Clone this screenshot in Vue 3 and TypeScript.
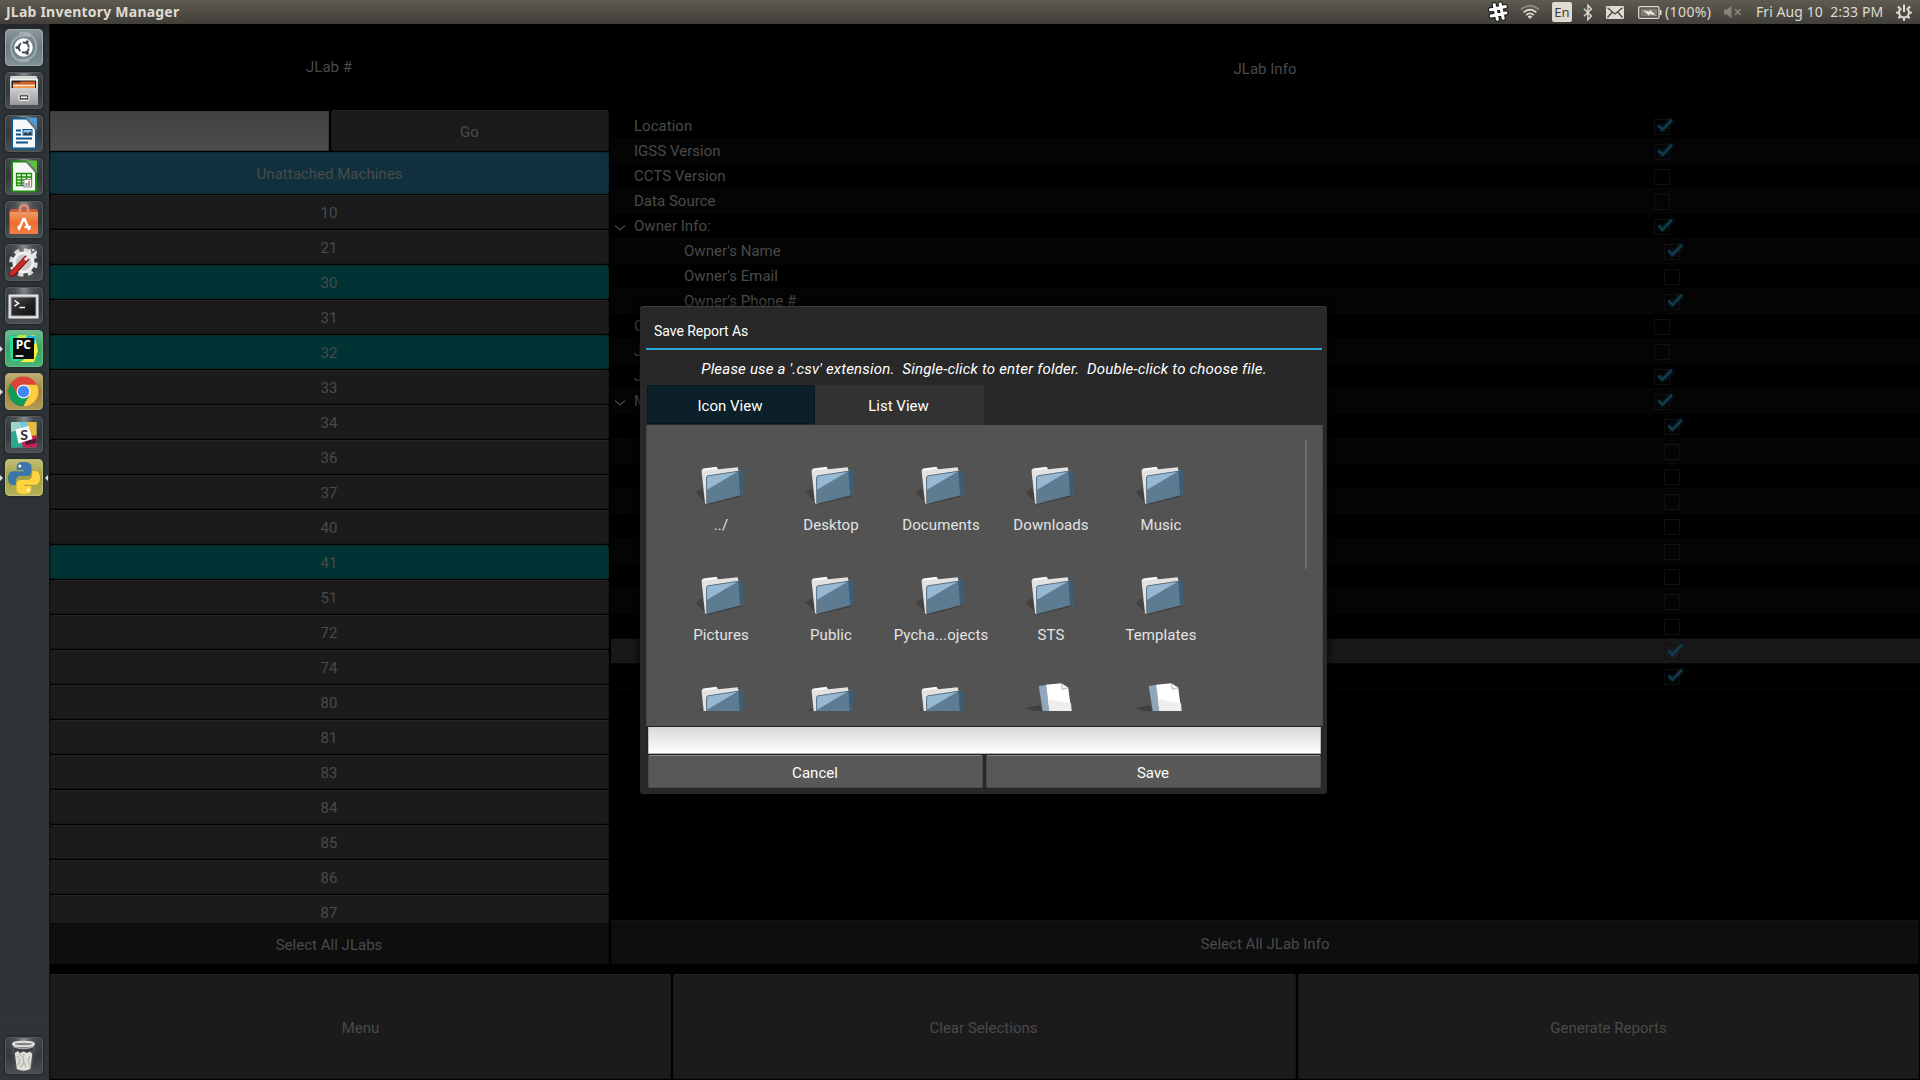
<script setup lang="ts">
interface TreeRow { label: string; depth: number; checked: boolean; caret?: boolean; active?: boolean }
interface LauncherApp { id: string; tint?: string; running?: boolean; focused?: boolean }
interface FileEntry { name: string; kind: 'folder' | 'file' }

const machines: number[] = [10, 21, 30, 31, 32, 33, 34, 36, 37, 40, 41, 51, 72, 74, 80, 81, 83, 84, 85, 86, 87]
const selected = new Set<number>([30, 32, 41])

const rows: TreeRow[] = [
  { label: 'Location', depth: 0, checked: true },
  { label: 'IGSS Version', depth: 0, checked: true },
  { label: 'CCTS Version', depth: 0, checked: false },
  { label: 'Data Source', depth: 0, checked: false },
  { label: 'Owner Info:', depth: 0, checked: true, caret: true },
  { label: "Owner's Name", depth: 1, checked: true },
  { label: "Owner's Email", depth: 1, checked: false },
  { label: "Owner's Phone #", depth: 1, checked: true },
  { label: 'O', depth: 0, checked: false },
  { label: 'J', depth: 0, checked: false },
  { label: 'J', depth: 0, checked: true },
  { label: 'M', depth: 0, checked: true, caret: true },
  { label: '', depth: 1, checked: true },
  ...Array.from({ length: 8 }, (): TreeRow => ({ label: '', depth: 1, checked: false })),
  { label: '', depth: 1, checked: true, active: true },
  { label: '', depth: 1, checked: true },
]

const files: FileEntry[] = [
  ...['../', 'Desktop', 'Documents', 'Downloads', 'Music', 'Pictures', 'Public', 'Pycha...ojects', 'STS', 'Templates', '', '', '']
    .map((name): FileEntry => ({ name, kind: 'folder' })),
  { name: '', kind: 'file' },
  { name: '', kind: 'file' },
]

const apps: LauncherApp[] = [
  { id: 'dash', tint: 'dash' },
  { id: 'files' },
  { id: 'writer' },
  { id: 'calc' },
  { id: 'software' },
  { id: 'settings' },
  { id: 'terminal' },
  { id: 'pycharm', tint: 'green', running: true },
  { id: 'chrome', tint: 'gold', running: true },
  { id: 'slack' },
  { id: 'python', tint: 'olive', running: true, focused: true },
]
</script>

<template>
  <div class="desktop">
    <header class="topbar">
      <span class="title">JLab Inventory Manager</span>
      <div class="tray">
        <svg class="i-slack" width="22" height="22" viewBox="0 0 22 22"><g fill="none" stroke-linecap="round"><g stroke="#22211f" stroke-width="5.4"><path d="M7.2 3.6l3.2 14.6M13.2 2.9l3 14.3M3.4 8.7l15-3.2M4.2 15l14.8-3.1" /></g><g stroke="#fff" stroke-width="3"><path d="M7.2 3.6l3.2 14.6M13.2 2.9l3 14.3M3.4 8.7l15-3.2M4.2 15l14.8-3.1" /></g></g></svg>
        <svg class="i-wifi" width="20" height="16" viewBox="0 0 20 16"><g fill="none" stroke-width="1.8"><path d="M1 5.5Q10-2 19 5.5" stroke="#8b8880" /><path d="M3.6 8.4q6.4-5.600 12.800 0" stroke="#dfdbd2" /><path d="M6.200 11q3.800-3.200 7.600 0" stroke="#dfdbd2" /></g><path d="M7.600 12.600q2.400-2 4.800 0L10 15z" fill="#dfdbd2" /></svg>
        <span class="lang">En</span>
        <svg class="i-bt" width="10" height="17" viewBox="0 0 10 17"><path d="M1 4.700l7.400 7.300-3.500 3.800V1.200l3.500 3.700L1 12.200" fill="none" stroke="#dfdbd2" stroke-width="1.400" /></svg>
        <svg class="i-mail" width="18" height="13" viewBox="0 0 18 13"><rect width="18" height="13" rx="1" fill="#dfdbd2" /><path d="M1.500 1.800L9 8l7.500-6.200M1.500 11.500L6.300 6M16.500 11.500L11.700 6" fill="none" stroke="#45433d" stroke-width="1.200" /></svg>
        <svg class="i-bat" width="24" height="13" viewBox="0 0 24 13"><rect x=".7" y=".7" width="20.300" height="11.600" rx="1.400" fill="none" stroke="#dfdbd2" stroke-width="1.300" /><rect x="2.600" y="2.600" width="16.500" height="7.800" fill="#7d7a72" /><path d="M22 4h1.500v5H22z" fill="#dfdbd2" /><path d="M5 4.200l6.800 1.400.1-2 6.100 6-6.600-1.500-.2 1.900z" fill="#e6e3dc" /></svg>
        <span class="percent">(100%)</span>
        <svg class="i-vol" width="18" height="14" viewBox="0 0 18 14"><path d="M0 4.500h3L7.500.5v13L3 9.500H0z" fill="#85827a" /><path d="M11 4l5.500 6M16.500 4L11 10" stroke="#85827a" stroke-width="1.800" /></svg>
        <span class="clock">Fri Aug 10&nbsp; 2:33 PM</span>
        <svg class="i-gear" width="16" height="17" viewBox="0 0 16 17"><g fill="none" stroke="#dfdbd2"><path d="M10.600 4.300a5 5 0 1 1-5.200 0" stroke-width="2" /><path d="M8 .5v7.500" stroke-width="2" /><path d="M3.800 4.400L2 2.600M12.200 4.400L14 2.600M3 8.600H.2M13 8.600h2.800M4.300 12.300l-1.900 1.900M11.700 12.300l1.900 1.900M8 13.800v3" stroke-width="2.200" /></g></svg>
      </div>
    </header>

    <div class="body">
      <nav class="launcher">
        <div v-for="app in apps" :key="app.id" class="tile" :class="app.tint">
          <i v-if="app.running" class="pip left" /><i v-if="app.focused" class="pip right" />
          <svg v-if="app.id === 'dash'" width="37" height="37" viewBox="0 0 37 37"><g fill="none" stroke="#d3dadd" stroke-opacity=".45" stroke-width="2"><path d="M6 21C5 10 15 4 25 7M14 5c11-4 18 5 17 14M31 14c2 12-6 18-16 17M24 31C14 35 6 29 6 18" /></g><circle cx="18.500" cy="18.500" r="9.300" fill="#fff" /><circle cx="18.800" cy="18.500" r="5" fill="none" stroke="#444b4f" stroke-width="1.900" stroke-dasharray="8.700 1.770" stroke-dashoffset="-.9" /><g fill="#444b4f"><circle cx="12" cy="18.500" r="1.600" /><circle cx="22.200" cy="12.800" r="1.600" /><circle cx="22.200" cy="24.200" r="1.600" /></g></svg>
          <svg v-else-if="app.id === 'files'" width="37" height="37" viewBox="0 0 37 37"><path d="M5.500 4h26l1.500 4v24.500H5V8z" fill="#d8d8d6" /><path d="M5 7h28v2H5z" fill="#f4f4f2" /><rect x="6.500" y="8.500" width="24.500" height="8" fill="#2b2420" /><path d="M8 10.500h7l1-1h14v7H8z" fill="#d4602c" /><path d="M8 12.700h22v1.300H8z" fill="#fff2df" /><path d="M8 14h22v2.500H8z" fill="#f39a52" /><path d="M5 16h28v16.500H5z" fill="url(#cab)" /><rect x="14" y="22" width="10" height="6.600" rx="1.200" fill="#888" stroke="#eee" /><rect x="15.500" y="24" width="7" height="2.600" fill="#fff" stroke="#333" stroke-width=".8" /><defs><linearGradient id="cab" x2="0" y2="1"><stop stop-color="#cfcfcf" /><stop offset="1" stop-color="#9c9c9c" /></linearGradient></defs></svg>
          <svg v-else-if="app.id === 'writer' || app.id === 'calc'" width="37" height="37" viewBox="0 0 37 37"><g :fill="app.id === 'writer' ? '#0c5a94' : '#1e8a0c'"><path d="M8 2.500h14.500L32 13v19.500q0 2-2 2H8q-2 0-2-2v-28q0-2 2-2z" /></g><path d="M21 2.500h10q1 0 1 1V14z" :fill="app.id === 'writer' ? '#4f9bd2' : '#5ac33b'" /><path d="M8 4.500h13.500L30 14.500v18H8z" fill="#f6f6f6" /><path d="M21 3l11 11.500" stroke="#70767a" stroke-width="2" />
            <g v-if="app.id === 'writer'"><path d="M11 15.500h5M11 19.500h5M11 23.500h16M11 27.500h12" stroke="#0c5489" stroke-width="1.900" /><rect x="18" y="14.500" width="9" height="5.600" fill="#86c5ef" stroke="#0c5489" /><path d="M19 20v-2l2-1 2 1.500 2-2 1.500 1v2.500z" fill="#2f3c43" /></g>
            <g v-else><path d="M11.500 15.500h15v12h-15zM11.500 19h15M11.500 22h15M11.500 25h15M16.500 15v12M21.500 15v12" fill="#dff5d8" stroke="#1e8a0c" stroke-width="1.300" /><rect x="19" y="21.500" width="7.500" height="7.500" fill="#fff" stroke="#888" /><path d="M21.500 28v-3" stroke="#2a8fd0" stroke-width="1.600" /><path d="M24 28v-5" stroke="#e2632d" stroke-width="1.600" /></g></svg>
          <svg v-else-if="app.id === 'software'" width="37" height="37" viewBox="0 0 37 37"><path d="M6 8h26l1 4H4z" fill="#c85d39" /><path d="M4.500 11h28.500v22H4.500z" fill="url(#bag)" /><path d="M15 13V7.500q0-3 4-3t4 3V13" fill="none" stroke="#e58c74" stroke-width="2.600" /><path d="M13.500 29l5-11h1l5 11M12.500 26h3.500M19.500 26h6.500" fill="none" stroke="#fff" stroke-width="2.400" /><defs><linearGradient id="bag" x2="0" y2="1"><stop stop-color="#f09a62" /><stop offset=".5" stop-color="#ee6e2d" /><stop offset="1" stop-color="#f08042" /></linearGradient></defs></svg>
          <svg v-else-if="app.id === 'settings'" width="37" height="37" viewBox="0 0 37 37"><circle cx="18.500" cy="18.500" r="12.300" fill="none" stroke="#d8d8d8" stroke-width="4" stroke-dasharray="5.200 4.460" /><circle cx="18.500" cy="18.500" r="9.500" fill="#c9c9c9" stroke="#efefef" stroke-width="3" /><path d="M7 30L21 15" stroke="#821111" stroke-width="6" stroke-linecap="round" /><path d="M7 29.500L21 14.800" stroke="#c72e2b" stroke-width="4" stroke-linecap="round" /><path d="M20 16l5-5" stroke="#eee" stroke-width="3" /><path d="M24 5.500q5-2 8 2-1 7-7 7-3-1-3-4z" fill="#e9e9e9" /><path d="M26 4l1 5 4-3" fill="none" stroke="#777" stroke-width="1.600" /></svg>
          <svg v-else-if="app.id === 'terminal'" width="37" height="37" viewBox="0 0 37 37"><rect x="3.500" y="7.500" width="30" height="24" fill="#e6e6e6" /><rect x="5.500" y="9.500" width="26" height="20" fill="#aaa" /><rect x="6.500" y="10.500" width="24" height="18" fill="url(#scr)" /><path d="M9.500 13.500l4 2.800-4 2.800M14.500 20.500h5.500" fill="none" stroke="#fff" stroke-width="1.500" /><defs><linearGradient id="scr" x2="1" y2="1"><stop stop-color="#4a4a4a" /><stop offset=".55" stop-color="#222" /><stop offset="1" stop-color="#111" /></linearGradient></defs></svg>
          <svg v-else-if="app.id === 'pycharm'" width="37" height="37" viewBox="0 0 37 37"><path d="M6 5h23l3 26H6z" fill="#1fc48c" /><path d="M5 6h9v25H8l-3-6z" fill="#2fd795" /><path d="M13 5h13l-7 7H9z" fill="#b6ec45" /><path d="M22 5h8l3 16-4 11H15l14-9z" fill="#f4ee3a" /><path d="M22 5l9 1-1 8-9-5z" fill="#18b6e0" /><rect x="8" y="8" width="21" height="21" fill="#0b0b0b" /><text x="18.300" y="19.300" text-anchor="middle" class="pc">PC</text><path d="M10.500 26h8" stroke="#fff" stroke-width="1.700" /></svg>
          <svg v-else-if="app.id === 'chrome'" width="37" height="37" viewBox="0 0 37 37"><circle cx="18.500" cy="18.500" r="15" fill="#db4437" /><path d="M18.500 11.700h13.400A15 15 0 0 1 18 33.500l6.400-11.600z" fill="#ffcd40" /><path d="M12.600 21.900L5.700 10.600A15 15 0 0 0 18 33.500l6.300-11.200z" fill="#0f9d58" /><circle cx="18.500" cy="18.500" r="6.900" fill="#f1f1f1" /><circle cx="18.500" cy="18.500" r="5.700" fill="#4285f4" /></svg>
          <svg v-else-if="app.id === 'slack'" width="37" height="37" viewBox="0 0 37 37"><rect x="6" y="6" width="25.500" height="25.500" rx="1" fill="#3eb991" /><path d="M6 6h17v8H6z" fill="#70cadb" /><path d="M6 6h9l3 13H6z" fill="#9bd3cf" /><path d="M22 6h9.500v15L25 22z" fill="#e9b93a" /><path d="M17 22l14.500-3v12.500h-19z" fill="#d2184f" /><path d="M20 25l11.500-2.500V27L21 29z" fill="#471b32" /><path d="M6 16l8-2 4 17.500H6z" fill="#2aa78c" /><path d="M10.500 13.500L23.500 10l4 13-14 4.500z" fill="#fff" /><text x="19" y="24" text-anchor="middle" class="sl">S</text></svg>
          <svg v-else width="37" height="37" viewBox="0 0 37 37"><path d="M18.300 3c-5 0-6.600 1.900-6.600 4.300V11h7v1.200H8.300C5 12.200 3 14.600 3 19c0 4.200 1.800 7 4.900 7h2.900v-3.900c0-2.900 2.300-5 5.200-5h6.600c2.200 0 3.900-1.900 3.900-4.100V7.300C26.500 4.600 23.800 3 18.300 3z" fill="#3b76a9" /><circle cx="14.800" cy="6.900" r="1.500" fill="#fff" /><path d="M18.300 3c-5 0-6.600 1.900-6.600 4.300V11h7v1.200H8.300C5 12.200 3 14.600 3 19c0 4.200 1.800 7 4.900 7h2.900v-3.900c0-2.900 2.300-5 5.200-5h6.600c2.200 0 3.900-1.900 3.900-4.100V7.300C26.500 4.600 23.800 3 18.300 3z" fill="#ffd33c" transform="rotate(180 19 19)" /><circle cx="23.200" cy="31" r="1.500" fill="#fff" /></svg>
        </div>
        <div class="tile trash">
          <svg width="37" height="37" viewBox="0 0 37 37"><path d="M8 9l3 22q7.500 4 15 0l3-22z" fill="#3c4143" stroke="#555a5c" stroke-width=".8" /><path d="M9.800 16l3-2 2 2 4-1.500 3 1.500 3.500-1.500 2 2.500-2 15q-6.500 3.500-13.500 0z" fill="#deded9" /><path d="M12 19l3 4-2 5M19 17l-1 6 3 7M25 19l-2 5 2 4M15 30l4-4M14 16l3 4" fill="none" stroke="#b2b2ad" stroke-width="1.100" /><path d="M8.500 9.500q10 4 20 0" fill="none" stroke="#a9aaa7" stroke-width="1.500" /><ellipse cx="18.500" cy="7" rx="10.500" ry="2.300" fill="#808382" stroke="#e4e4df" stroke-width="2" /></svg>
        </div>
      </nav>

      <main class="app">
        <div class="columns">
          <section class="machines">
            <h2 class="heading">JLab #</h2>
            <div class="search"><div class="query" /><div class="btn go">Go</div></div>
            <div class="btn unattached">Unattached Machines</div>
            <div class="list">
              <div v-for="m in machines" :key="m" class="btn item" :class="{ on: selected.has(m) }">{{ m }}</div>
            </div>
            <div class="all">Select All JLabs</div>
          </section>
          <section class="info">
            <h2 class="heading info-heading">JLab Info</h2>
            <div class="tree">
              <div v-for="(row, n) in rows" :key="n" class="row" :class="{ active: row.active, child: row.depth === 1 }">
                <svg class="caret" width="12" height="8" viewBox="0 0 12 8"><path v-if="row.caret" d="M1 1.500l5 4.500 5-4.500" fill="none" stroke="#444" stroke-width="1.200" /></svg>
                <span class="label">{{ row.label }}</span>
                <span class="check"><svg v-if="row.checked" width="20" height="16" viewBox="0 0 20 16"><path d="M4.500 7.500l4 4.300L18 1.800" fill="none" stroke="#133a4b" stroke-width="2.700" /></svg></span>
              </div>
            </div>
            <div class="all info-all">Select All JLab Info</div>
          </section>
        </div>
        <footer class="actions">
          <div class="btn">Menu</div><div class="btn mid">Clear Selections</div><div class="btn">Generate Reports</div>
        </footer>
      </main>
    </div>

    <div class="dialog">
      <h1>Save Report As</h1>
      <p class="hint">Please use a '.csv' extension.&nbsp; Single-click to enter folder.&nbsp; Double-click to choose file.</p>
      <div class="tabs"><div class="tab current">Icon View</div><div class="tab">List View</div></div>
      <div class="panel">
        <div class="files">
          <div v-for="(f, n) in files" :key="n" class="file">
            <svg v-if="f.kind === 'folder'" width="52" height="42" viewBox="0 0 52 42"><path d="M.5 27.500l6.500-4.500 4.500 16z" fill="#424242" /><path d="M12 39.500l34-8.500" stroke="#3e3e3e" stroke-width="1" /><path d="M6.500 5.500l1.400-2L21.500 1.700l1.700 2.500 19.500-1.900 1 4.200L13 13l-1 26-2-.8z" fill="#e2e2e2" /><path d="M8.500 4.700l13-1.700" stroke="#fff" stroke-width="1.600" /><path d="M11.300 13q0-1.800 1.700-2.200L48 5.300v24.200L12 38.800z" fill="#5e7c91" /><path d="M11.300 13q0-1.800 1.700-2.200L43.300 6.200 11.700 25z" fill="#97b8d2" /><path d="M43.300 6l5-.8-.5 24.400-2.700.8z" fill="#3d5d74" /><path d="M11.600 38.500V13q0-1.800 1.500-2.200l30-4.500" fill="none" stroke="#435765" stroke-width=".7" /></svg>
            <svg v-else width="52" height="42" viewBox="0 0 52 42"><path d="M0 23l15-3 3 9z" fill="#404040" /><path d="M13.700 1L21 0l6 40h-7z" fill="#8fa6bd" /><path d="M21-.2l15-1.500 7.300 4.400L48 40H26.500z" fill="#fff" /><path d="M22.800 14.300L46 18.300 48 40H26.500z" fill="#eee" /><path d="M36.300-1.500l1 6 6-1.800" fill="#f7f7f7" stroke="#999" stroke-width=".7" /></svg>
            <span>{{ f.name }}</span>
          </div>
        </div>
        <div class="thumb" />
      </div>
      <div class="filename" />
      <div class="choices"><div class="choice">Cancel</div><div class="choice">Save</div></div>
    </div>
  </div>
</template>

<style>
body { margin: 0; background: #000; overflow: hidden; }
</style>

<style scoped>
* { box-sizing: border-box; }
.desktop { position: relative; width: 1920px; height: 1080px; background: #000; color: #4a4a4a; font: 15px Roboto, sans-serif; letter-spacing: .02px; display: flex; flex-direction: column; overflow: hidden; }
.topbar { height: 24px; flex: none; display: flex; justify-content: space-between; align-items: center; padding: 0 8px 0 6px; background: linear-gradient(#5e5b50, #403e39); color: #dfdbd2; font-family: "Noto Sans", sans-serif; letter-spacing: 0; line-height: 24px; white-space: nowrap; }
.title { font-size: 14px; font-weight: 700; letter-spacing: .22px; }
.tray { display: flex; align-items: center; }
.i-wifi { margin-left: 11px; }
.lang { margin-left: 12px; width: 20px; height: 20px; border-radius: 2px; background: #dfdbd2; color: #403e39; font-size: 13px; line-height: 21px; text-align: center; }
.i-bt { margin-left: 11px; }
.i-mail { margin-left: 13px; }
.i-bat { margin-left: 14px; }
.percent { margin-left: 3px; width: 47px; font-size: 14px; letter-spacing: .4px; }
.i-vol { margin-left: 12px; }
.clock { margin-left: 14px; width: 129px; font-size: 14px; letter-spacing: .06px; }
.i-gear { margin-left: 11px; }

.body { flex: 1; display: flex; min-height: 0; }
.launcher { width: 50px; flex: none; display: flex; flex-direction: column; gap: 6px; padding: 5px 0 6px 5px; background: linear-gradient(#24282b, #2d3336 12px, #2e3437); border-right: 1px solid #111; }
.tile { position: relative; width: 38px; height: 37px; flex: none; border-radius: 4px; border: 1px solid #555b5d; background: radial-gradient(ellipse at 50% 0, #898d8f 0, #4a4f51 35%, transparent 65%), linear-gradient(#404548, #33383b 50%, #4b5053); box-shadow: 0 0 3px #171a1b; }
.tile svg { display: block; margin: -1px 0 0 -1px; }
.dash { background: linear-gradient(#8a979c, #6c7c83 50%, #829198); border-color: #9eabb0; }
.green { background: linear-gradient(#6fbb8e, #37a365 50%, #4db377); border-color: #67bd8a; }
.gold { background: linear-gradient(#bfae76, #9c8440 50%, #b29c5a); border-color: #b9a870; }
.olive { background: linear-gradient(#c2bf76, #a19f3f 50%, #b3b15a); border-color: #bfbc75; }
.trash { margin-top: auto; }
.pip { position: absolute; top: 15px; border: 3px solid transparent; width: 0; height: 0; }
.pip.left { left: -6px; border-left-color: #ddd; border-right: 0; }
.pip.right { right: -6px; border-right-color: #ddd; border-left: 0; }
.pc { font: 700 12px "Open Sans", sans-serif; fill: #fff; letter-spacing: 0; }
.sl { font: 700 14px Lato, sans-serif; fill: #2b2b2b; letter-spacing: 0; }

.app { flex: 1; display: flex; flex-direction: column; }
.columns { height: 950px; display: flex; gap: 2px; }
.machines { width: 559px; display: flex; flex-direction: column; }
.heading { margin: 0; height: 86px; font-size: 15px; font-weight: 400; line-height: 86px; text-align: center; }
.machines .heading { padding-right: 1px; }
.btn { display: flex; align-items: center; justify-content: center; background: #1b1b1b; border: 1px solid #151515; border-top-color: #232323; border-radius: 2px; }
.search { display: flex; gap: 2px; height: 42px; }
.query { width: 279px; height: 40px; margin-top: 1px; background: linear-gradient(#424242, #4c4c4c); border: 1px solid #3a3a3a; }
.go { width: 278px; height: 41px; padding-top: 2px; padding-right: 1px; }
.unattached { height: 42px; margin-bottom: 1px; padding-top: 2px; background: #11303e; border-color: #0d2733; }
.list { height: 728px; overflow: hidden; }
.item { height: 34px; margin-bottom: 1px; padding-top: 2px; padding-right: 1px; }
.item.on { background: #003333; border-color: #0a2626; }
.all { height: 41px; line-height: 42px; padding-right: 1px; text-align: center; background: #0e0e0e; border: 1px solid #0a0a0a; }
.info { flex: 1; display: flex; flex-direction: column; margin-right: 1px; }
.info-heading { height: 90px; line-height: 90px; }
.tree { height: 806px; margin-right: -1px; }
.row { height: 25px; display: flex; align-items: center; border-bottom: 1px solid #060606; }
.row:nth-child(even) { background: #040404; }
.row.active { background: #181818; }
.caret { flex: none; margin: 4px 8px 0 3px; }
.label { width: 1020px; flex: none; }
.child .label { width: 1030px; padding-left: 50px; }
.check { width: 16px; height: 16px; flex: none; border: 1px solid #101010; margin-top: 2px; display: flex; }
.check svg { flex: none; margin: -2px 0 0 -1px; filter: drop-shadow(0 0 2px #0b2a38); }
.info-all { height: 44px; line-height: 46px; border-top-color: #141414; padding-right: 0; }
.actions { height: 106px; display: flex; gap: 2px; padding-right: 1px; }
.actions .btn { flex: 1; height: 105px; padding-top: 3px; }
.actions .mid { padding-right: 2px; }

.dialog { position: absolute; left: 640px; top: 306px; width: 687px; height: 488px; padding: 1px 4px 5px 6px; background: #282828; border-top: 1px solid #3b3b3b; border-radius: 3px; color: #fff; box-shadow: 0 0 8px #000; }
h1 { margin: 0 1px 0 0; height: 42px; padding-left: 8px; font-size: 14px; font-weight: 400; line-height: 46px; letter-spacing: -.04px; border-bottom: 2px solid #2fa7d4; }
.hint { margin: 0 1px 0 0; height: 35px; line-height: 39px; text-align: center; font-style: italic; letter-spacing: .2px; white-space: nowrap; }
.tabs { display: flex; height: 40px; padding-left: 1px; }
.tab { width: 169px; height: 40px; line-height: 42px; padding-right: 2px; text-align: center; background: #323232; }
.tab.current { width: 168px; height: 39px; background: #0b2028; border: 1px solid #0a181d; line-height: 40px; border-radius: 2px; }
.panel { height: 301px; display: flex; justify-content: space-between; padding: 15px 15px 0 19px; background: #535353; border: solid #474747; border-width: 0 1px; }
.files { width: 550px; height: 271px; overflow: hidden; display: grid; grid-template-columns: repeat(5, 110px); grid-auto-rows: 110px; }
.file { padding-top: 25px; display: flex; flex-direction: column; align-items: center; color: #e3e3e3; }
.file svg { overflow: visible; flex: none; }
.file span { margin-top: 8px; line-height: 20px; letter-spacing: .1px; }
.thumb { width: 2px; height: 129px; background: #6b6b6b; }
.filename { height: 29px; margin: 0 1px; background: linear-gradient(#d9d9d9, #fff); border: 1px solid #222; box-shadow: inset 0 -1px #b0b0b0, inset 1px 0 #bbb, inset -1px 0 #bbb; }
.choices { display: flex; gap: 3px; padding: 0 2px; }
.choice { flex: 1; height: 33px; line-height: 34px; padding-right: 1px; text-align: center; background: #585858; border: 1px solid #4b4b4b; border-top-color: #898989; border-radius: 2px; }
</style>
